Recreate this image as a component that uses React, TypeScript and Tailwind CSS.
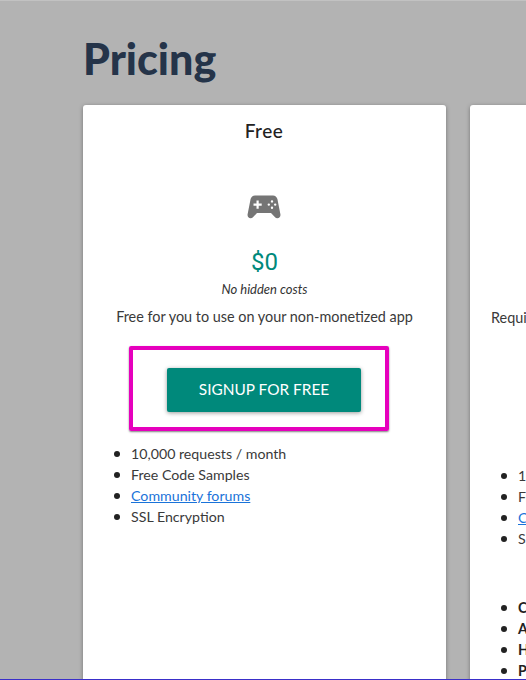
const freeFeatures = ["10,000 requests / month", "Free Code Samples", "Community forums", "SSL Encryption"];
const paidFeatures = ["100,000 requests / month", "Free Code Samples", "Community forums", "SSL Encryption"];
const paidExtras = ["Commercial use", "API analytics", "High priority", "Priority support"];

function GamepadIcon() {
  return (
    <svg viewBox="0 0 34 24" className="h-[24px] w-[34px] fill-[#757575]">
      <path
        fillRule="evenodd"
        d="M8 0.5h18c2.2 0 3.9 1.5 4.4 3.6l3 15.2c.4 2.2-1 4-3 4-1 0-1.9-.4-2.6-1.2L24 18H10l-3.800 4.100c-.7.8-1.600 1.200-2.600 1.200-2 0-3.400-1.800-3-4l3-15.200C4.100 2 5.800.5 8 .5zM9.500 5.500v3h-3v2.200h3v3h2.200v-3h3V8.500h-3v-3zM25 5.200a1.200 1.200 0 1 0 0 2.400 1.200 1.200 0 0 0 0-2.400zM21.800 8.400a1.200 1.200 0 1 0 0 2.400 1.200 1.200 0 0 0 0-2.400zM28.200 8.400a1.200 1.200 0 1 0 0 2.400 1.200 1.200 0 0 0 0-2.400zM25 11.600a1.200 1.200 0 1 0 0 2.400 1.200 1.200 0 0 0 0-2.400z"
      />
    </svg>
  );
}

function FeatureList({ items, bold }: { items: string[]; bold?: boolean }) {
  return (
    <ul className={bold ? "pl-[31px] text-[14.2px] leading-[21px] font-bold text-[#222]" : "pl-[31px] text-[14.2px] leading-[21px] text-[#3a3a3a]"}>
      {items.map((item) => (
        <li key={item} className="flex items-center gap-[11px]">
          <span className="h-[6px] w-[6px] shrink-0 rounded-full bg-[#222]" />
          {item === "Community forums" ? <a href="#" className="text-[#1a73d9] underline">{item}</a> : <span>{item}</span>}
        </li>
      ))}
    </ul>
  );
}

export default function App() {
  return (
    <div className="h-[680px] w-[526px] overflow-hidden border-t border-b border-t-[#c2c2c2] border-b-[#3a2fc9] bg-[#b3b3b3] pt-[32px] pl-[83px] font-['Lato',sans-serif]">
      <h1 className="text-[43px] leading-[52px] font-black text-[#253449]">Pricing</h1>
      <div className="mt-[20px] flex gap-[24px]">
        <section className="h-[600px] w-[363px] shrink-0 rounded-[3px] bg-white shadow-[0_1px_4px_rgba(0,0,0,0.35)]">
          <h2 className="pt-[14px] pr-[1px] text-center text-[19px] leading-[24px] font-medium tracking-[0.5px] text-[#222]">Free</h2>
          <div className="mt-[52px] flex justify-center pr-[2px]">
            <GamepadIcon />
          </div>
          <p className="mt-[27px] text-center font-['Roboto',sans-serif] text-[24px] leading-[32px] text-[#00897b]">$0</p>
          <p className="mt-[3px] text-center text-[13px] leading-[16px] text-[#333] italic">No hidden costs</p>
          <p className="mt-[10px] text-center text-[14.4px] leading-[20px] text-[#3a3a3a]">Free for you to use on your non-monetized app</p>
          <div className="mt-[19px] ml-[46px] flex h-[85px] w-[260px] items-center justify-center rounded-[2px] border-[4px] border-[#e600bd] pt-[2px] pl-[10px] shadow-[0_1px_2px_rgba(0,0,0,0.5)]">
            <button className="h-[44px] w-[194px] rounded-[2px] bg-[#00897b] text-[15.4px] text-white shadow-[0_1px_4px_rgba(0,0,0,0.4)]">SIGNUP FOR FREE</button>
          </div>
          <div className="mt-[12px]">
            <FeatureList items={freeFeatures} />
          </div>
        </section>
        <section className="h-[600px] w-[363px] shrink-0 rounded-[3px] bg-white shadow-[0_1px_4px_rgba(0,0,0,0.35)]">
          <p className="mt-[203px] pl-[21px] text-[14.4px] leading-[20px] text-[#3a3a3a]">Requires a subscription to use on your app</p>
          <div className="mt-[137px]">
            <FeatureList items={paidFeatures} />
          </div>
          <div className="mt-[48px]">
            <FeatureList items={paidExtras} bold />
          </div>
        </section>
      </div>
    </div>
  );
}
